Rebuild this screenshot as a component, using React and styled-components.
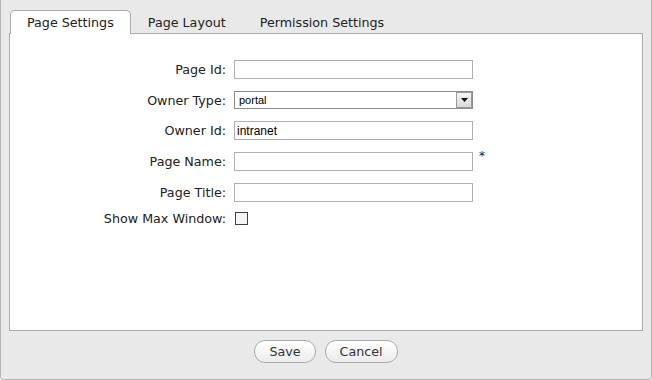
import React from "react";
import styled, { createGlobalStyle } from "styled-components";

const GlobalStyle = createGlobalStyle`
  html, body {
    margin: 0;
    padding: 0;
    background: #ffffff;
  }
  body {
    font-family: "DejaVu Sans", Verdana, sans-serif;
  }
`;

const Frame = styled.div`
  width: 652px;
  height: 380px;
  box-sizing: border-box;
  background: #e9e9e9;
  border: 1px solid #b4b4b4;
  border-top: none;
  border-radius: 0 0 4px 4px;
  padding: 0 8px;
  display: flex;
  flex-direction: column;
`;

const TabBar = styled.div`
  display: flex;
  align-items: flex-end;
  height: 33px;
  padding-left: 1px;
  position: relative;
  z-index: 1;
`;

const Tab = styled.div`
  box-sizing: border-box;
  height: ${p => (p.active ? "24px" : "23px")};
  margin-bottom: ${p => (p.active ? "-1px" : "0")};
  padding: 0 16px;
  display: flex;
  align-items: center;
  font-size: 12.7px;
  color: #222;
  background: ${p => (p.active ? "#ffffff" : "transparent")};
  border: 1px solid ${p => (p.active ? "#aaaaaa" : "transparent")};
  border-bottom: none;
  border-radius: 5px 5px 0 0;
  white-space: nowrap;
`;

const Panel = styled.div`
  height: 298px;
  box-sizing: border-box;
  background: #ffffff;
  border: 1px solid #aaaaaa;
  padding-top: 26px;
`;

const Form = styled.div`
  display: grid;
  grid-template-columns: 216px 239px auto;
  grid-template-rows: 19px 18px 19px 19px 19px 13px;
  column-gap: 8px;
  row-gap: 12px;
  align-items: center;
`;

const Label = styled.label`
  text-align: right;
  font-size: 12.7px;
  color: #222;
  line-height: 15px;
  margin-top: ${p => (p.check ? "-4px" : "0")};
`;

const TextInput = styled.input`
  box-sizing: border-box;
  width: 239px;
  height: 19px;
  margin: 0;
  padding: 0 2px;
  border: 1px solid #b0b0b0;
  font-family: "Liberation Sans", Arial, sans-serif;
  font-size: 12px;
  color: #000;
  background: #fff;
  outline: none;
`;

const SelectBox = styled.div`
  box-sizing: border-box;
  width: 239px;
  height: 18px;
  border: 1px solid #8c8c8c;
  display: flex;
  align-items: center;
  justify-content: space-between;
  font-family: "Liberation Sans", Arial, sans-serif;
  font-size: 11px;
  color: #000;
  padding-left: 4px;
  background: #fff;
`;

const DropButton = styled.div`
  box-sizing: border-box;
  width: 16px;
  height: 16px;
  border: 1px solid #9a9a9a;
  background: linear-gradient(#f6f6f6, #d9d9d9);
  display: flex;
  align-items: center;
  justify-content: center;
`;

const Required = styled.span`
  font-size: 12px;
  color: #222;
  align-self: start;
  margin-left: -2px;
  margin-top: -2px;
  line-height: 12px;
`;

const Check = styled.span`
  display: block;
  box-sizing: border-box;
  width: 13px;
  height: 13px;
  margin-left: 1px;
  margin-top: -4px;
  border: 1px solid #404040;
  background: #f4f4f4;
`;

const Footer = styled.div`
  display: flex;
  justify-content: center;
  gap: 9px;
  padding-top: 9px;
`;

const Button = styled.button`
  box-sizing: border-box;
  height: 23px;
  padding: 0 14px;
  border: 1px solid #ababab;
  border-radius: 11px;
  background: linear-gradient(#ffffff, #ececec);
  font-family: "DejaVu Sans", Verdana, sans-serif;
  font-size: 12.7px;
  color: #333;
  cursor: pointer;
`;

const fields = [
  { label: "Page Id:", kind: "text", value: "" },
  { label: "Owner Type:", kind: "select", value: "portal" },
  { label: "Owner Id:", kind: "text", value: "intranet" },
  { label: "Page Name:", kind: "text", value: "", required: true },
  { label: "Page Title:", kind: "text", value: "" },
  { label: "Show Max Window:", kind: "check" }
];

const Field = ({ kind, value }) => {
  if (kind === "select") {
    return (
      <SelectBox>
        <span>{value}</span>
        <DropButton>
          <svg width="7" height="4" viewBox="0 0 7 4">
            <path d="M0 0h7L3.5 4z" fill="#111" />
          </svg>
        </DropButton>
      </SelectBox>
    );
  }
  if (kind === "check") return <Check />;
  return <TextInput defaultValue={value} />;
};

export default function App() {
  return (
    <>
      <GlobalStyle />
      <Frame>
        <TabBar>
          <Tab active>Page Settings</Tab>
          <Tab>Page Layout</Tab>
          <Tab>Permission Settings</Tab>
        </TabBar>
        <Panel>
          <Form>
            {fields.map(f => (
              <React.Fragment key={f.label}>
                <Label check={f.kind === "check"}>{f.label}</Label>
                <Field kind={f.kind} value={f.value} />
                {f.required ? <Required>*</Required> : <span />}
              </React.Fragment>
            ))}
          </Form>
        </Panel>
        <Footer>
          <Button>Save</Button>
          <Button>Cancel</Button>
        </Footer>
      </Frame>
    </>
  );
}
